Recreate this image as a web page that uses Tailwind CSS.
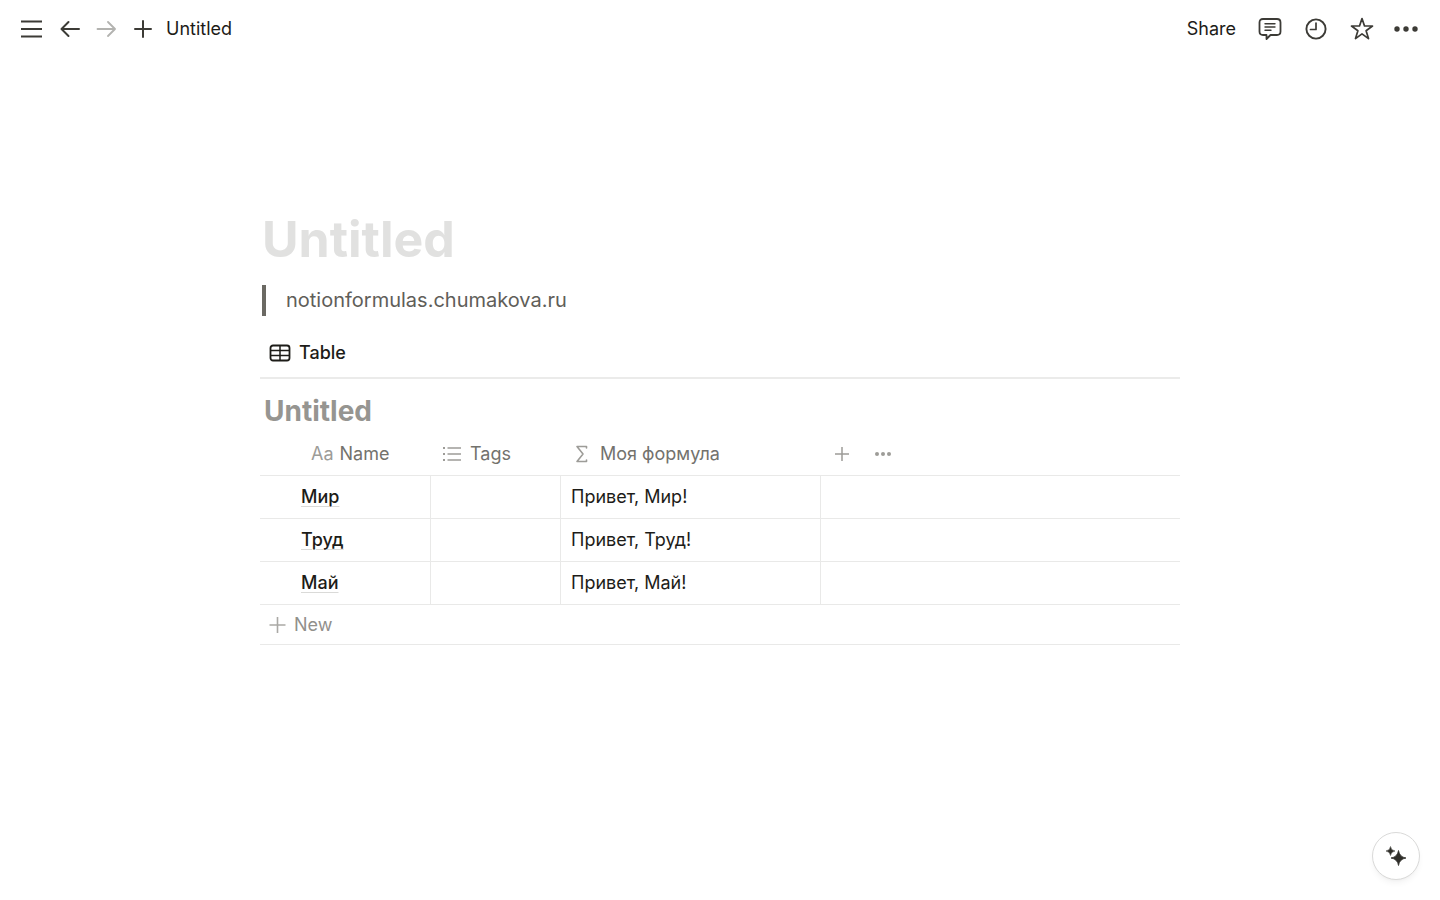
<!DOCTYPE html>
<html lang="en">
<head>
    <meta charset="UTF-8">
    <meta name="viewport" content="width=device-width, initial-scale=1.0">
    <title>Untitled</title>
    <script src="https://cdn.jsdelivr.net/npm/@tailwindcss/browser@4"></script>
</head>
<body class="bg-white text-[#1d1c18] font-['Inter','Liberation_Sans',sans-serif] text-[18px] leading-6">
    <!-- Top bar -->
    <header class="flex items-center justify-between h-[57px] px-5">
        <nav class="flex items-center text-[#3c3b36]">
            <button aria-label="Menu">
                <svg class="w-[22px] h-5" viewBox="0 0 22 20" fill="none" stroke="currentColor" stroke-width="2"><path d="M1 2.500h21M1 10h21M1 17.500h21"/></svg>
            </button>
            <button class="ml-[18px]" aria-label="Back">
                <svg class="w-5 h-5" viewBox="0 0 20 20" fill="none" stroke="currentColor" stroke-width="2" stroke-linecap="round" stroke-linejoin="round"><path d="M19 10H2M8.500 3L1.500 10L8.500 17"/></svg>
            </button>
            <button class="ml-4 text-[#b3b3b0]" aria-label="Forward">
                <svg class="w-5 h-5" viewBox="0 0 20 20" fill="none" stroke="currentColor" stroke-width="1.800" stroke-linecap="round" stroke-linejoin="round"><path d="M1.500 10H18.500M12 3L19 10L12 17"/></svg>
            </button>
            <button class="ml-4" aria-label="New page">
                <svg class="w-5 h-5" viewBox="0 0 20 20" fill="none" stroke="currentColor" stroke-width="2" stroke-linecap="round"><path d="M3 10H19M11 2V18"/></svg>
            </button>
            <a href="#" class="ml-[14px] text-[#1d1c18]">Untitled</a>
        </nav>
        <div class="flex items-center text-[#3c3b36]">
            <button class="text-[#1d1c18]">Share</button>
            <button class="ml-[22px]" aria-label="Comments">
                <svg class="w-6 h-6" viewBox="0 0 24 24" fill="none" stroke="currentColor" stroke-width="1.800" stroke-linejoin="round" stroke-linecap="round"><path d="M5 2H19Q22.500 2 22.500 5.500V14.500Q22.500 18 19 18H12.500L8.500 22V18H5Q1.500 18 1.500 14.500V5.500Q1.500 2 5 2Z"/><path stroke-width="1.400" d="M7 6.700H17M7 10H17M7 13.300H13"/></svg>
            </button>
            <button class="ml-[22px]" aria-label="Updates">
                <svg class="w-6 h-6" viewBox="0 0 24 24" fill="none" stroke="currentColor" stroke-width="1.900" stroke-linecap="round" stroke-linejoin="round"><circle cx="12" cy="12" r="9.600"/><path stroke-width="1.700" d="M12 6V12.500H6.500"/></svg>
            </button>
            <button class="ml-[22px]" aria-label="Favorite">
                <svg class="w-6 h-6" viewBox="0 0 24 24" fill="none" stroke="currentColor" stroke-width="1.700" stroke-linejoin="round"><path d="M12 1.500L14.500 9H22.500L16.100 13.800L18.500 21.600L12 16.900L5.500 21.600L7.900 13.800L1.500 9H9.500Z"/></svg>
            </button>
            <button class="ml-5" aria-label="More">
                <svg class="w-[26px] h-6" viewBox="0 0 26 24" fill="currentColor"><circle cx="3" cy="12" r="2.700"/><circle cx="12" cy="12" r="2.700"/><circle cx="21" cy="12" r="2.700"/></svg>
            </button>
        </div>
    </header>

    <!-- Page -->
    <main class="max-w-[920px] mx-auto pt-[150px]">
        <h1 class="pl-[2px] text-[50px] leading-[64px] font-bold text-[#e1e1e0]">Untitled</h1>
        <blockquote class="mt-[14px] ml-[2px] border-l-4 border-[#6b6963] pl-5 text-[20px] leading-[31px] text-[#5f5e59]">notionformulas.chumakova.ru</blockquote>

        <!-- View tabs -->
        <div class="mt-3 flex items-center h-[51px] pl-[9px] border-b-2 border-[#ebebea]">
            <button class="flex items-center gap-2 font-medium">
                <svg class="w-[22px] h-5" viewBox="0 0 22 20" fill="none" stroke="currentColor" stroke-width="1.800"><rect x="1.500" y="2.500" width="19" height="15" rx="2.500"/><path stroke-width="1.500" d="M1.500 7.500H20.500M1.500 12.500H20.500M11 2.500V17.500"/></svg>
                Table
            </button>
        </div>

        <h2 class="mt-[14px] pl-1 text-[28px] leading-9 font-bold text-[#969591]">Untitled</h2>

        <!-- Database -->
        <table class="mt-1 w-full table-fixed border-separate border-spacing-0 text-left">
            <thead class="text-[#73726d]">
                <tr class="h-[43px]">
                    <th class="w-[171px] p-0 pl-[51px] font-normal border-b border-[#e9e9e8]">
                        <div class="flex items-center gap-[6px]"><span class="text-[#9d9c98]">Aa</span> Name</div>
                    </th>
                    <th class="w-[130px] p-0 pl-[11px] font-normal border-b border-[#e9e9e8]">
                        <div class="flex items-center gap-2">
                            <svg class="w-5 h-5 text-[#9d9c98]" viewBox="0 0 20 20" fill="none" stroke="currentColor" stroke-width="1.500"><path d="M5.500 4H19M5.500 10H19M5.500 16H19"/><path stroke-width="2" d="M1 4H3M1 10H3M1 16H3"/></svg>
                            Tags
                        </div>
                    </th>
                    <th class="w-[260px] p-0 pl-[11px] font-normal border-b border-[#e9e9e8]">
                        <div class="flex items-center gap-2">
                            <svg class="w-5 h-5 text-[#9d9c98]" viewBox="0 0 20 20" fill="none" stroke="currentColor" stroke-width="1.600" stroke-linecap="round" stroke-linejoin="round"><path d="M14.500 4V2.500H5L11 10L5 17.500H14.500V16"/></svg>
                            Моя формула
                        </div>
                    </th>
                    <th class="p-0 pl-[11px] font-normal border-b border-[#e9e9e8] text-[#9d9c98]">
                        <div class="flex items-center gap-[21px]">
                            <button aria-label="Add property"><svg class="w-5 h-5 block" viewBox="0 0 20 20" fill="none" stroke="currentColor" stroke-width="1.500"><path d="M3 10H17M10 3V17"/></svg></button>
                            <button aria-label="Table options"><svg class="w-5 h-5 block" viewBox="0 0 20 20" fill="currentColor"><circle cx="4" cy="10" r="2"/><circle cx="10" cy="10" r="2"/><circle cx="16" cy="10" r="2"/></svg></button>
                        </div>
                    </th>
                </tr>
            </thead>
            <tbody>
                <tr class="h-[43px]">
                    <td class="p-0 pl-[41px] border-b border-r border-[#e9e9e8]"><a href="#" class="font-medium underline decoration-[#dadad8] decoration-1 underline-offset-3">Мир</a></td>
                    <td class="p-0 border-b border-r border-[#e9e9e8]"></td>
                    <td class="p-0 pl-[10px] border-b border-r border-[#e9e9e8]">Привет, Мир!</td>
                    <td class="p-0 border-b border-[#e9e9e8]"></td>
                </tr>
                <tr class="h-[43px]">
                    <td class="p-0 pl-[41px] border-b border-r border-[#e9e9e8]"><a href="#" class="font-medium underline decoration-[#dadad8] decoration-1 underline-offset-3">Труд</a></td>
                    <td class="p-0 border-b border-r border-[#e9e9e8]"></td>
                    <td class="p-0 pl-[10px] border-b border-r border-[#e9e9e8]">Привет, Труд!</td>
                    <td class="p-0 border-b border-[#e9e9e8]"></td>
                </tr>
                <tr class="h-[43px]">
                    <td class="p-0 pl-[41px] border-b border-r border-[#e9e9e8]"><a href="#" class="font-medium underline decoration-[#dadad8] decoration-1 underline-offset-3">Май</a></td>
                    <td class="p-0 border-b border-r border-[#e9e9e8]"></td>
                    <td class="p-0 pl-[10px] border-b border-r border-[#e9e9e8]">Привет, Май!</td>
                    <td class="p-0 border-b border-[#e9e9e8]"></td>
                </tr>
            </tbody>
        </table>
        <button class="flex items-center gap-2 w-full h-10 pl-2 border-b border-[#e9e9e8] text-[#91908c]">
            <svg class="w-[18px] h-[18px] text-[#aaa9a5]" viewBox="0 0 18 18" fill="none" stroke="currentColor" stroke-width="1.600"><path d="M1.500 9H17.500M9.500 1V17"/></svg>
            New
        </button>
    </main>

    <!-- AI button -->
    <button aria-label="Ask AI" class="fixed right-5 bottom-5 flex items-center justify-center size-12 rounded-full bg-white border border-[#d9d9d8] shadow-md shadow-black/5">
        <svg class="w-6 h-6" viewBox="0 0 24 24" fill="#2f2e29"><path d="M14.500 6.500Q15.500 13 22 14Q15.500 15 14.500 21.500Q13.500 15 7 14Q13.500 13 14.500 6.500Z" stroke="#2f2e29" stroke-width=".8" stroke-linejoin="round"/><path d="M6.500 2.500Q7 6.500 11 7Q7 7.500 6.500 11.500Q6 7.500 2 7Q6 6.500 6.500 2.500Z" stroke="#2f2e29" stroke-width=".5" stroke-linejoin="round"/></svg>
    </button>
</body>
</html>
